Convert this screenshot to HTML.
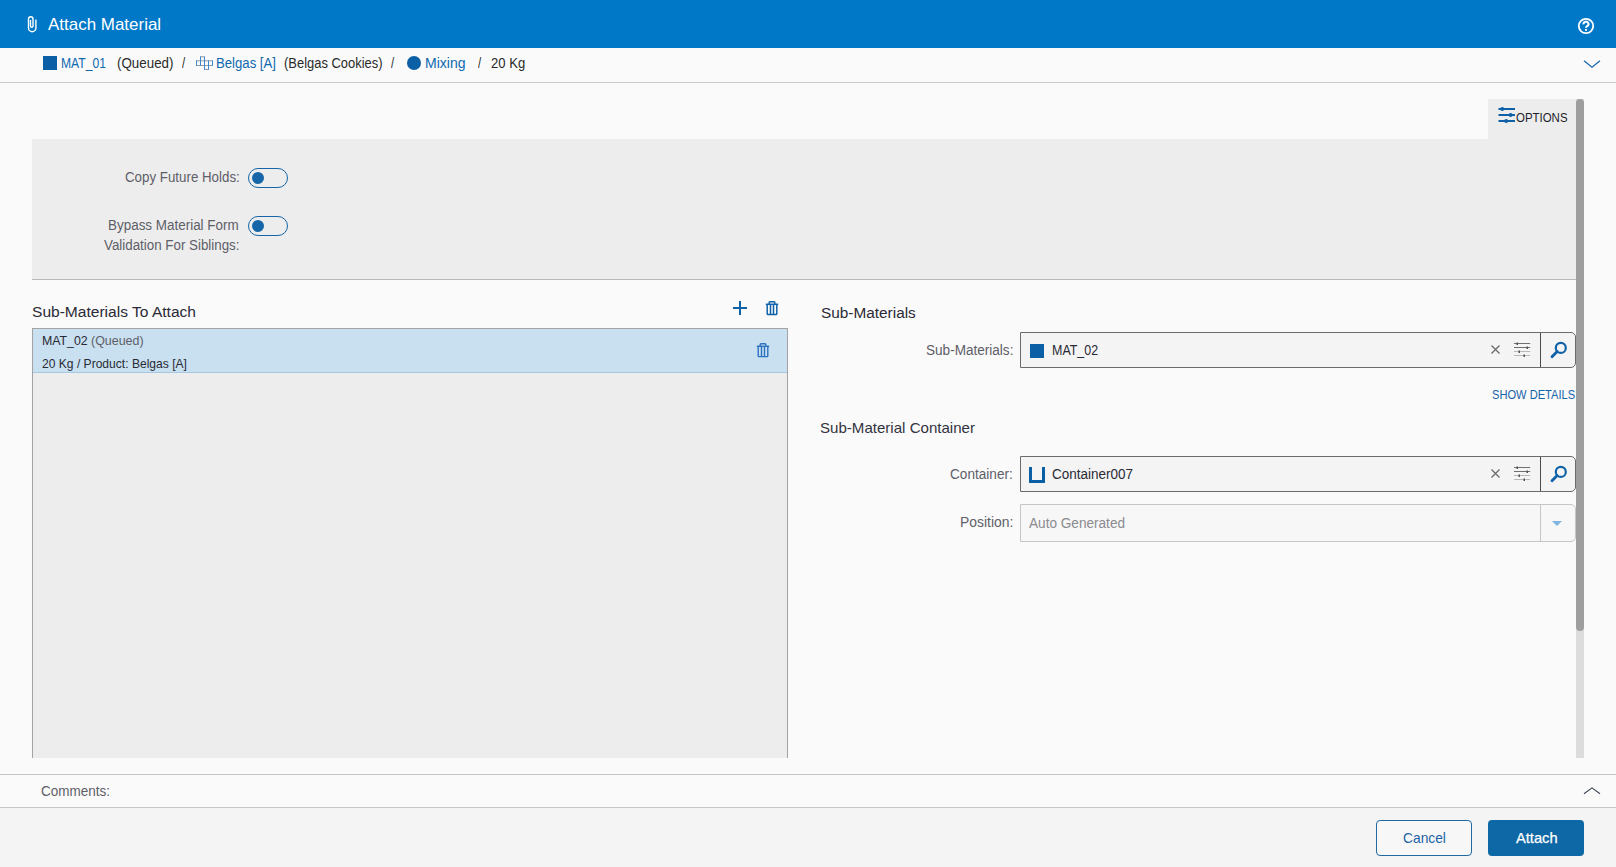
<!DOCTYPE html>
<html><head><meta charset="utf-8">
<style>
html,body{margin:0;padding:0}
body{width:1616px;height:867px;overflow:hidden;position:relative;background:#fafafa;font-family:"Liberation Sans",sans-serif}
.a{position:absolute;box-sizing:border-box}
.t{position:absolute;white-space:nowrap;transform-origin:0 0;font-family:"Liberation Sans",sans-serif}
svg{position:absolute;overflow:visible}
</style></head><body>
<!-- header -->
<div class="a" style="left:0;top:0;width:1616px;height:48px;background:#0078c8"></div>
<svg style="left:26px;top:15px" width="12" height="18" viewBox="0 0 12 18">
 <path d="M9.9 4.5 V13 A3.7 3.7 0 0 1 2.5 13 V4 A2.25 2.25 0 0 1 7 4 V11 A1.25 1.25 0 0 1 4.5 11 V5" fill="none" stroke="#fff" stroke-width="1.4"/>
</svg>
<svg style="left:1577px;top:17px" width="18" height="18" viewBox="0 0 18 18">
 <circle cx="9" cy="9" r="7.2" fill="none" stroke="#fff" stroke-width="1.8"/>
 <path d="M6.5 7.3 A2.5 2.4 0 1 1 9.9 9.3 Q9 9.8 9 10.8" fill="none" stroke="#fff" stroke-width="2.1"/>
 <circle cx="9" cy="12.9" r="1.1" fill="#fff"/>
</svg>
<!-- breadcrumb -->
<div class="a" style="left:0;top:82px;width:1616px;height:1px;background:#c9c9c9"></div>
<div class="a" style="left:43px;top:56px;width:14px;height:14px;background:#0b5fa5"></div>
<svg style="left:195px;top:56px" width="19" height="14" viewBox="0 0 19 14">
 <g fill="none" stroke-width="1">
 <path d="M1 4.8 H17.8 M1 9.5 H17.8 M5 0.8 H9.5 M9.5 13.5 H13.5" stroke="#8f9aa5"/>
 <path d="M1.5 4.5 V9.8 M17.5 4.5 V9.8 M5.5 0.5 V9.8 M9.5 0.5 V13.8 M13.5 4.5 V13.8" stroke="#3d88cc"/>
 </g>
</svg>
<div class="a" style="left:407px;top:56px;width:14px;height:14px;border-radius:50%;background:#0b5fa5"></div>
<svg style="left:1583px;top:59px" width="18" height="10" viewBox="0 0 18 10">
 <path d="M1 1.8 L9 8.2 L17 1.8" fill="none" stroke="#1664ad" stroke-width="1.2"/>
</svg>
<!-- options tab + panel -->
<div class="a" style="left:1488px;top:99px;width:88px;height:40px;background:#ededed"></div>
<svg style="left:1498px;top:105px" width="18" height="19" viewBox="0 0 18 19">
 <g stroke="#0f62a8" stroke-width="2" fill="#0f62a8">
 <path d="M0.5 4 H17" /><path d="M0.5 10 H17"/><path d="M0.5 16 H17"/>
 </g>
 <circle cx="4.3" cy="3.9" r="2" fill="#0f62a8"/>
 <circle cx="12.6" cy="10" r="2" fill="#0f62a8"/>
 <circle cx="8.2" cy="16" r="2" fill="#0f62a8"/>
</svg>
<div class="a" style="left:32px;top:139px;width:1544px;height:141px;background:#ededed;border-bottom:1px solid #b9b9b9"></div>
<!-- toggles -->
<div class="a" style="left:248px;top:168px;width:40px;height:20px;border:1.5px solid #1565a8;border-radius:10px"></div>
<div class="a" style="left:252px;top:172px;width:12px;height:12px;border-radius:50%;background:#1565a8"></div>
<div class="a" style="left:248px;top:216px;width:40px;height:20px;border:1.5px solid #1565a8;border-radius:10px"></div>
<div class="a" style="left:252px;top:220px;width:12px;height:12px;border-radius:50%;background:#1565a8"></div>
<!-- scrollbar -->
<div class="a" style="left:1576px;top:99px;width:8px;height:659px;background:#dcdcdc"></div>
<div class="a" style="left:1576px;top:99px;width:8px;height:532px;background:#9e9e9e;border-radius:4px"></div>
<!-- list -->
<svg style="left:732px;top:300px" width="16" height="16" viewBox="0 0 16 16">
 <path d="M1 8 H15 M8 1 V15" stroke="#0f62a8" stroke-width="2"/>
</svg>
<svg style="left:765px;top:300px" width="14" height="16" viewBox="0 0 14 16">
 <g fill="none" stroke="#0f62a8" stroke-width="1.5">
 <path d="M0.8 4.3 H13.2"/>
 <path d="M4.2 4 V2.6 Q4.2 1.8 5 1.8 H9 Q9.8 1.8 9.8 2.6 V4"/>
 <path d="M2.2 4.5 V13.8 Q2.2 14.6 3 14.6 H11 Q11.8 14.6 11.8 13.8 V4.5"/>
 <path d="M5.5 5 V14.5 M8.5 5 V14.5"/>
 </g>
</svg>
<div class="a" style="left:32px;top:328px;width:756px;height:430px;background:#ededed;border:1px solid #a3a3a3;border-bottom:none"></div>
<div class="a" style="left:33px;top:329px;width:754px;height:44px;background:#c8e0f0;border-bottom:1px solid #a6c8e2"></div>
<svg style="left:756px;top:342px" width="14" height="16" viewBox="0 0 14 16">
 <g fill="none" stroke="#2c70c0" stroke-width="1.4">
 <path d="M0.8 4.3 H13.2"/>
 <path d="M4.2 4 V2.6 Q4.2 1.8 5 1.8 H9 Q9.8 1.8 9.8 2.6 V4"/>
 <path d="M2.2 4.5 V13.8 Q2.2 14.6 3 14.6 H11 Q11.8 14.6 11.8 13.8 V4.5"/>
 <path d="M5.5 5 V14.5 M8.5 5 V14.5"/>
 </g>
</svg>
<!-- inputs -->
<div class="a" style="left:1020px;top:332px;width:556px;height:36px;background:#f4f4f4;border:1px solid #6b6b6b;border-radius:0 5px 5px 0"></div>
<div class="a" style="left:1540px;top:333px;width:1px;height:34px;background:#4a4a4a"></div>
<div class="a" style="left:1030px;top:344px;width:14px;height:14px;background:#0b5fa5"></div>
<div class="a" style="left:1020px;top:456px;width:556px;height:36px;background:#f4f4f4;border:1px solid #6b6b6b;border-radius:0 5px 5px 0"></div>
<div class="a" style="left:1540px;top:457px;width:1px;height:34px;background:#4a4a4a"></div>
<svg style="left:1029px;top:467px" width="16" height="16" viewBox="0 0 16 16">
 <path d="M0 0 H3 V13 H13 V0 H16 V16 H0 Z" fill="#0b5fa5"/>
</svg>
<!-- x and slider icons -->
<svg style="left:1490px;top:344px" width="11" height="11" viewBox="0 0 11 11">
 <path d="M1.5 1.5 L9.5 9.5 M9.5 1.5 L1.5 9.5" stroke="#6a6a6a" stroke-width="1.25"/>
</svg>
<svg style="left:1513px;top:341px" width="19" height="17" viewBox="0 0 19 17">
 <g stroke-width="1"><path d="M1 2.5H17.2M1 6.5H17.2" stroke="#707070"/><path d="M1 10.5H17.2M1 14.5H17.2" stroke="#b8b8b8"/></g>
 <g fill="#5a5050"><rect x="3.5" y="1.5" width="1.5" height="2.5"/><rect x="13.5" y="5.5" width="1.5" height="2.5"/><rect x="5.5" y="9.5" width="1.5" height="2.5"/><rect x="10.5" y="13.5" width="1.5" height="2.5"/></g>
</svg>
<svg style="left:1549px;top:341px" width="19" height="18" viewBox="0 0 19 18">
 <circle cx="11.8" cy="6.9" r="5" fill="none" stroke="#0f62a8" stroke-width="2.2"/>
 <path d="M8.2 10.5 L3 15.8" stroke="#0f62a8" stroke-width="2.8" stroke-linecap="round"/>
</svg>
<svg style="left:1490px;top:468px" width="11" height="11" viewBox="0 0 11 11">
 <path d="M1.5 1.5 L9.5 9.5 M9.5 1.5 L1.5 9.5" stroke="#6a6a6a" stroke-width="1.25"/>
</svg>
<svg style="left:1513px;top:465px" width="19" height="17" viewBox="0 0 19 17">
 <g stroke-width="1"><path d="M1 2.5H17.2M1 6.5H17.2" stroke="#707070"/><path d="M1 10.5H17.2M1 14.5H17.2" stroke="#b8b8b8"/></g>
 <g fill="#5a5050"><rect x="3.5" y="1.5" width="1.5" height="2.5"/><rect x="13.5" y="5.5" width="1.5" height="2.5"/><rect x="5.5" y="9.5" width="1.5" height="2.5"/><rect x="10.5" y="13.5" width="1.5" height="2.5"/></g>
</svg>
<svg style="left:1549px;top:465px" width="19" height="18" viewBox="0 0 19 18">
 <circle cx="11.8" cy="6.9" r="5" fill="none" stroke="#0f62a8" stroke-width="2.2"/>
 <path d="M8.2 10.5 L3 15.8" stroke="#0f62a8" stroke-width="2.8" stroke-linecap="round"/>
</svg>
<!-- position -->
<div class="a" style="left:1020px;top:504px;width:556px;height:38px;background:#f7f7f7;border:1px solid #c6c6c6;border-radius:0 5px 5px 0"></div>
<div class="a" style="left:1540px;top:505px;width:1px;height:36px;background:#c6c6c6"></div>
<svg style="left:1552px;top:521px" width="11" height="6" viewBox="0 0 11 6">
 <path d="M0 0 H10 L5 5 Z" fill="#7fb5e0"/>
</svg>
<!-- comments -->
<div class="a" style="left:0;top:774px;width:1616px;height:34px;background:#fafafa;border-top:1px solid #c6c6c6;border-bottom:1px solid #c6c6c6"></div>
<svg style="left:1583px;top:785px" width="18" height="10" viewBox="0 0 18 10">
 <path d="M1 8.8 L9 2.9 L17 8.8" fill="none" stroke="#3a4552" stroke-width="1.1"/>
</svg>
<div class="a" style="left:0;top:808px;width:1616px;height:59px;background:#f4f4f4"></div>
<div class="a" style="left:1376px;top:820px;width:96px;height:36px;border:1px solid #1f6aa5;border-radius:4px;background:#f7f7f7"></div>
<div class="a" style="left:1488px;top:820px;width:96px;height:36px;border-radius:4px;background:#0f68a6"></div>
<span id="t_title" class="t" style="left:48.00px;top:15.55px;font-size:17px;line-height:17px;color:#ffffff;font-weight:400;transform:scaleX(0.9976)">Attach Material</span>
<span id="b1" class="t" style="left:61.30px;top:56.10px;font-size:14px;line-height:14px;color:#0d68b0;font-weight:400;transform:scaleX(0.8659)">MAT_01</span>
<span id="b2" class="t" style="left:117.20px;top:56.10px;font-size:14px;line-height:14px;color:#2a2a2a;font-weight:400;transform:scaleX(0.9552)">(Queued)</span>
<span id="b3" class="t" style="left:181.60px;top:56.10px;font-size:14px;line-height:14px;color:#2a2a2a;font-weight:400;transform:scaleX(0.8205)">/</span>
<span id="b4" class="t" style="left:216.20px;top:56.10px;font-size:14px;line-height:14px;color:#0d68b0;font-weight:400;transform:scaleX(0.9394)">Belgas [A]</span>
<span id="b5" class="t" style="left:284.30px;top:56.10px;font-size:14px;line-height:14px;color:#2a2a2a;font-weight:400;transform:scaleX(0.9243)">(Belgas Cookies)</span>
<span id="b6" class="t" style="left:391.00px;top:56.10px;font-size:14px;line-height:14px;color:#2a2a2a;font-weight:400;transform:scaleX(0.8205)">/</span>
<span id="b7" class="t" style="left:425.40px;top:56.10px;font-size:14px;line-height:14px;color:#0d68b0;font-weight:400;transform:scaleX(1.0006)">Mixing</span>
<span id="b8" class="t" style="left:478.00px;top:56.10px;font-size:14px;line-height:14px;color:#2a2a2a;font-weight:400;transform:scaleX(0.8205)">/</span>
<span id="b9" class="t" style="left:491.40px;top:56.10px;font-size:14px;line-height:14px;color:#2a2a2a;font-weight:400;transform:scaleX(0.9335)">20 Kg</span>
<span id="opt" class="t" style="left:1516.30px;top:110.65px;font-size:13px;line-height:13px;color:#1d1d2b;font-weight:400;transform:scaleX(0.8807)">OPTIONS</span>
<span id="l1" class="t" style="left:125.40px;top:170.30px;font-size:14px;line-height:14px;color:#5e5e68;font-weight:400;transform:scaleX(0.9515)">Copy Future Holds:</span>
<span id="l2" class="t" style="left:108.10px;top:218.30px;font-size:14px;line-height:14px;color:#5e5e68;font-weight:400;transform:scaleX(0.9599)">Bypass Material Form</span>
<span id="l3" class="t" style="left:104.00px;top:237.90px;font-size:14px;line-height:14px;color:#5e5e68;font-weight:400;transform:scaleX(0.9531)">Validation For Siblings:</span>
<span id="h1" class="t" style="left:32.40px;top:303.82px;font-size:15.5px;line-height:15.5px;color:#2a2a36;font-weight:400;transform:scaleX(1.0036)">Sub-Materials To Attach</span>
<span id="h2" class="t" style="left:820.60px;top:304.62px;font-size:15.5px;line-height:15.5px;color:#2a2a36;font-weight:400;transform:scaleX(0.9913)">Sub-Materials</span>
<span id="h3" class="t" style="left:820.10px;top:420.35px;font-size:15px;line-height:15px;color:#33333f;font-weight:400;transform:scaleX(1.0048)">Sub-Material Container</span>
<span id="i1" class="t" style="left:41.60px;top:333.52px;font-size:13.5px;line-height:13.5px;color:#2a2a35;font-weight:400;transform:scaleX(0.9136)">MAT_02</span>
<span id="i2" class="t" style="left:91.30px;top:333.52px;font-size:13.5px;line-height:13.5px;color:#5e5e68;font-weight:400;transform:scaleX(0.9208)">(Queued)</span>
<span id="i3" class="t" style="left:41.60px;top:356.65px;font-size:13px;line-height:13px;color:#2a2a35;font-weight:400;transform:scaleX(0.9283)">20 Kg / Product: Belgas [A]</span>
<span id="f1" class="t" style="left:925.50px;top:343.30px;font-size:14px;line-height:14px;color:#5e5e68;font-weight:400;transform:scaleX(0.9685)">Sub-Materials:</span>
<span id="f2" class="t" style="left:1052.30px;top:343.20px;font-size:14px;line-height:14px;color:#2a2a35;font-weight:400;transform:scaleX(0.8897)">MAT_02</span>
<span id="sd" class="t" style="left:1492.30px;top:387.75px;font-size:13px;line-height:13px;color:#1763a8;font-weight:400;transform:scaleX(0.8550)">SHOW DETAILS</span>
<span id="f3" class="t" style="left:949.70px;top:467.10px;font-size:14px;line-height:14px;color:#5e5e68;font-weight:400;transform:scaleX(0.9719)">Container:</span>
<span id="f4" class="t" style="left:1052.40px;top:467.10px;font-size:14px;line-height:14px;color:#2a2a35;font-weight:400;transform:scaleX(0.9640)">Container007</span>
<span id="f5" class="t" style="left:959.60px;top:514.90px;font-size:14px;line-height:14px;color:#5e5e68;font-weight:400;transform:scaleX(0.9926)">Position:</span>
<span id="f6" class="t" style="left:1029.20px;top:515.90px;font-size:14px;line-height:14px;color:#8a8a8f;font-weight:400;transform:scaleX(0.9714)">Auto Generated</span>
<span id="cm" class="t" style="left:40.60px;top:784.10px;font-size:14px;line-height:14px;color:#5e5e68;font-weight:400;transform:scaleX(0.9633)">Comments:</span>
<span id="bc" class="t" style="left:1402.80px;top:830.45px;font-size:15px;line-height:15px;color:#1b63a5;font-weight:400;transform:scaleX(0.9195)">Cancel</span>
<span id="ba" class="t" style="left:1515.70px;top:830.45px;font-size:15px;line-height:15px;color:#ffffff;font-weight:400;-webkit-text-stroke:0.25px #fff;transform:scaleX(0.9772)">Attach</span>
</body></html>
